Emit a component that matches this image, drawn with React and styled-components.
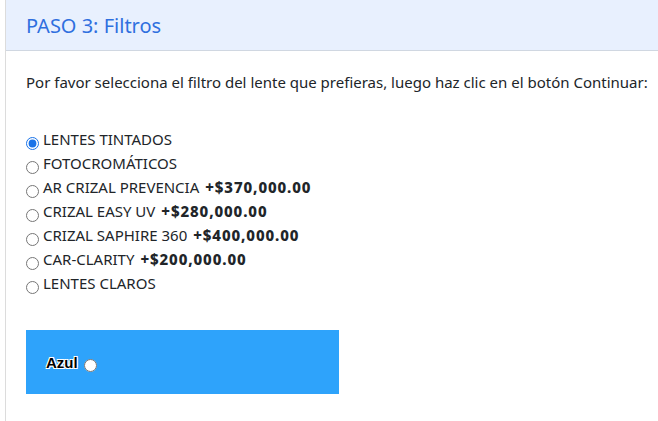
import React from 'react';
import styled, { createGlobalStyle } from 'styled-components';

// Styles
const Global = createGlobalStyle`
    html, body {
        margin:0;
        padding:0;
        background:#fff;
    }
    body {
        font-family:"Noto Sans", "Open Sans", sans-serif;
        color:#212529;
        overflow:hidden;
    }
`

const Card = styled.section`
    margin-left:5px;
    min-height:421px;
    border-left:1px solid #dcdcdc;
`

const Header = styled.header`
    height:50px;
    display:flex;
    align-items:center;
    padding:0 20px;
    background-color:#e8f0fe;
    border-bottom:1px solid #d0d7e1;
`

const Title = styled.h2`
    margin:0;
    font-size:20px;
    font-weight:400;
    color:#2f6fdf;
`

const Body = styled.div`
    padding:20px 20px;
`

const Intro = styled.p`
    margin:0 0 33px 0;
    font-size:15px;
    line-height:22px;
    white-space:nowrap;
`

const Options = styled.div`
    display:flex;
    flex-direction:column;
`

const Option = styled.label`
    display:flex;
    align-items:flex-end;
    height:24px;
    font-size:15px;
    line-height:22px;
`

const Radio = styled.input.attrs({ type: 'radio' })`
    width:13px;
    height:13px;
    margin:0 4px 0 0;
    accent-color:#1a73e8;
`

const Price = styled.strong`
    font-size:15px;
    font-weight:800;
    letter-spacing:0.9px;
    margin-left:6px;
`

const ColorBox = styled.div`
    width:313px;
    height:64px;
    margin-top:36px;
    display:flex;
    align-items:center;
    padding-left:20px;
    box-sizing:border-box;
    background-color:#2ea3fb;
`

const ColorName = styled.label`
    display:flex;
    align-items:center;
    font-family:"Liberation Sans", Arial, sans-serif;
    font-size:15px;
    font-weight:700;
    color:#000;
    text-shadow:-1px -1px 0 #fff, 1px -1px 0 #fff, -1px 1px 0 #fff, 1px 1px 0 #fff;
`

const ColorRadio = styled.input.attrs({ type: 'radio' })`
    width:13px;
    height:13px;
    margin:7px 0 0 6px;
`

const filters = [
    { name: 'LENTES TINTADOS' },
    { name: 'FOTOCROMÁTICOS' },
    { name: 'AR CRIZAL PREVENCIA', price: '+$370,000.00' },
    { name: 'CRIZAL EASY UV', price: '+$280,000.00' },
    { name: 'CRIZAL SAPHIRE 360', price: '+$400,000.00' },
    { name: 'CAR-CLARITY', price: '+$200,000.00' },
    { name: 'LENTES CLAROS' },
];

// Main Function
export default function App() {
    return (
        <>
            <Global />
            <Card>
                <Header>
                    <Title>PASO 3: Filtros</Title>
                </Header>
                <Body>
                    <Intro>Por favor selecciona el filtro del lente que prefieras, luego haz clic en el botón Continuar:</Intro>
                    <Options>
                        {filters.map((f, i) => (
                            <Option key={f.name}>
                                <Radio name="filtro" defaultChecked={i === 0} />
                                {f.name}
                                {f.price && <Price>{f.price}</Price>}
                            </Option>
                        ))}
                    </Options>
                    <ColorBox>
                        <ColorName>
                            Azul
                            <ColorRadio name="color" />
                        </ColorName>
                    </ColorBox>
                </Body>
            </Card>
        </>
    )
}
